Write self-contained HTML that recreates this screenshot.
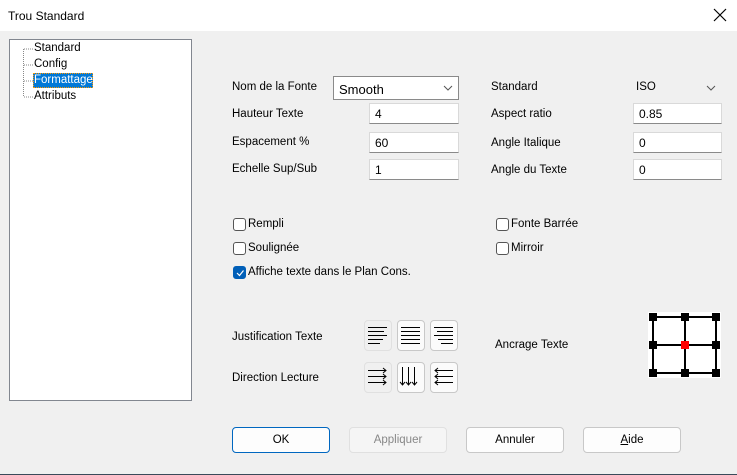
<!DOCTYPE html>
<html><head><meta charset="utf-8"><style>
*{box-sizing:border-box}
body{margin:0;width:737px;height:475px;position:relative;background:#f0f0f0;font-family:"Liberation Sans",sans-serif;font-size:11.5px;color:#000;overflow:hidden}
.a{position:absolute}
.title{left:0;top:0;width:737px;height:31px;background:#fff}
.in{position:absolute;background:#fff;border:1px solid #d9d9d9;border-bottom:1px solid #8a8a8a;height:21px;padding:3px 0 0 5px;font-size:12px}
.lbl{position:absolute;font-size:11.5px;white-space:nowrap}
.cb{position:absolute;width:13px;height:13px;border:1px solid #555;border-radius:3px;background:#fff}
.btn{position:absolute;width:98px;height:26px;border:1px solid #c8c8c8;border-radius:4px;background:#fdfdfd;text-align:center;line-height:24px;font-size:11.5px}
.ib{position:absolute;width:28px;height:31px;border:1px solid #c8c8c8;border-radius:4px;background:#fbfbfb}
</style></head><body>
<div class="a title"></div>
<div class="lbl" style="left:8px;top:9px;font-size:12px">Trou Standard</div>
<svg class="a" style="left:713px;top:8px" width="14" height="14"><path d="M1 1L13 13M13 1L1 13" stroke="#000" stroke-width="1.2"/></svg>
<div class="a" style="left:0;top:474px;width:737px;height:1px;background:#3a4a5a"></div>

<div class="a" style="left:9px;top:39px;width:183px;height:362px;background:#fff;border:1px solid #828790"></div>
<svg class="a" style="left:22px;top:44px" width="14" height="60"><path d="M1.5 5V53M2 5H11M2 21H11M2 37H11M2 53H11" stroke="#888" stroke-dasharray="1 1" fill="none"/></svg>
<div class="lbl" style="left:34px;top:42px">Standard</div>
<div class="lbl" style="left:34px;top:58px">Config</div>
<div class="a" style="left:33px;top:73px;width:60px;height:15px;background:#0078d7;border:1px dotted #f90"></div>
<div class="lbl" style="left:34px;top:74px;color:#fff">Formattage</div>
<div class="lbl" style="left:34px;top:90px">Attributs</div>

<div class="lbl" style="left:232px;top:81px">Nom de la Fonte</div>
<div class="in" style="left:333px;top:76px;width:126px;height:24px;border:1px solid #8a8a8a;padding-top:5px;font-size:13px">Smooth</div>
<svg class="a" style="left:443px;top:85px" width="10" height="6"><path d="M1 1L5 5L9 1" stroke="#555" fill="none"/></svg>
<div class="lbl" style="left:232px;top:108px">Hauteur Texte</div>
<div class="in" style="left:369px;top:103px;width:90px">4</div>
<div class="lbl" style="left:232px;top:136px">Espacement %</div>
<div class="in" style="left:369px;top:132px;width:90px">60</div>
<div class="lbl" style="left:232px;top:163px">Echelle Sup/Sub</div>
<div class="in" style="left:369px;top:159px;width:90px">1</div>

<div class="lbl" style="left:491px;top:81px">Standard</div>
<div class="lbl" style="left:636px;top:81px">ISO</div>
<svg class="a" style="left:706px;top:85px" width="10" height="6"><path d="M1 1L5 5L9 1" stroke="#555" fill="none"/></svg>
<div class="lbl" style="left:491px;top:108px">Aspect ratio</div>
<div class="in" style="left:633px;top:103px;width:89px">0.85</div>
<div class="lbl" style="left:491px;top:137px">Angle Italique</div>
<div class="in" style="left:633px;top:132px;width:89px">0</div>
<div class="lbl" style="left:491px;top:164px">Angle du Texte</div>
<div class="in" style="left:633px;top:159px;width:89px">0</div>

<div class="cb" style="left:233px;top:218px"></div><div class="lbl" style="left:248px;top:218px">Rempli</div>
<div class="cb" style="left:233px;top:242px"></div><div class="lbl" style="left:248px;top:242px">Soulignée</div>
<div class="cb" style="left:233px;top:266px;background:#005fb8;border-color:#005fb8"></div>
<svg class="a" style="left:235px;top:268px" width="10" height="10"><path d="M2 5L4.5 7.5L8.5 2.5" stroke="#fff" fill="none" stroke-width="1.2"/></svg>
<div class="lbl" style="left:248px;top:266px">Affiche texte dans le Plan Cons.</div>
<div class="cb" style="left:496px;top:218px"></div><div class="lbl" style="left:511px;top:218px">Fonte Barrée</div>
<div class="cb" style="left:496px;top:242px"></div><div class="lbl" style="left:511px;top:242px">Mirroir</div>

<div class="lbl" style="left:232px;top:331px">Justification Texte</div>
<div class="lbl" style="left:232px;top:372px">Direction Lecture</div>
<div class="lbl" style="left:495px;top:339px">Ancrage Texte</div>

<div class="ib" style="left:364px;top:320px;border-color:#e0e0e0;background:#f0f0f0"></div>
<div class="ib" style="left:397px;top:320px"></div>
<div class="ib" style="left:430px;top:320px"></div>
<div class="ib" style="left:364px;top:362px;border-color:#e0e0e0;background:#f0f0f0"></div>
<div class="ib" style="left:397px;top:362px"></div>
<div class="ib" style="left:430px;top:362px"></div>
<svg class="a" style="left:0;top:0" width="737" height="475">
<g stroke="#000" stroke-width="1" fill="none">
<path d="M368 327.5H387M368 331.5H384M368 335.5H387M368 339.5H383M368 343.5H380"/>
<path d="M401 327.5H420M401 331.5H420M401 335.5H420M401 339.5H420M401 343.5H420"/>
<path d="M434 327.5H453M437 331.5H453M434 335.5H453M438 339.5H453M441 343.5H453"/>
<path d="M368 370.5H386M368 376.5H386M368 382.5H386M383 368L386 370.5L383 373M383 374L386 376.5L383 379M383 380L386 382.5L383 385"/>
<path d="M402.5 367V385M408.5 367V385M414.5 367V385M400 382L402.5 385L405 382M406 382L408.5 385L411 382M412 382L414.5 385L417 382"/>
<path d="M435 370.5H453M435 376.5H453M435 382.5H453M438 368L435 370.5L438 373M438 374L435 376.5L438 379M438 380L435 382.5L438 385"/>
</g>
<rect x="648" y="312" width="73" height="66" fill="#fff"/>
<g stroke="#000" stroke-width="2" fill="none">
<rect x="653" y="317" width="63" height="56"/>
<path d="M685 317V373M653 345H716"/>
</g>
<g fill="#000">
<rect x="649" y="313" width="8" height="8"/><rect x="681" y="313" width="8" height="8"/><rect x="712" y="313" width="8" height="8"/>
<rect x="649" y="341" width="8" height="8"/><rect x="712" y="341" width="8" height="8"/>
<rect x="649" y="369" width="8" height="8"/><rect x="681" y="369" width="8" height="8"/><rect x="712" y="369" width="8" height="8"/>
</g>
<rect x="681" y="341" width="8" height="8" fill="#f00"/>
</svg>

<div class="btn" style="left:232px;top:427px;border:1px solid #0067c0">OK</div>
<div class="btn" style="left:349px;top:427px;background:#f5f5f5;border-color:#e0e0e0;color:#888">Appliquer</div>
<div class="btn" style="left:466px;top:427px">Annuler</div>
<div class="btn" style="left:583px;top:427px"><u>A</u>ide</div>
</body></html>
